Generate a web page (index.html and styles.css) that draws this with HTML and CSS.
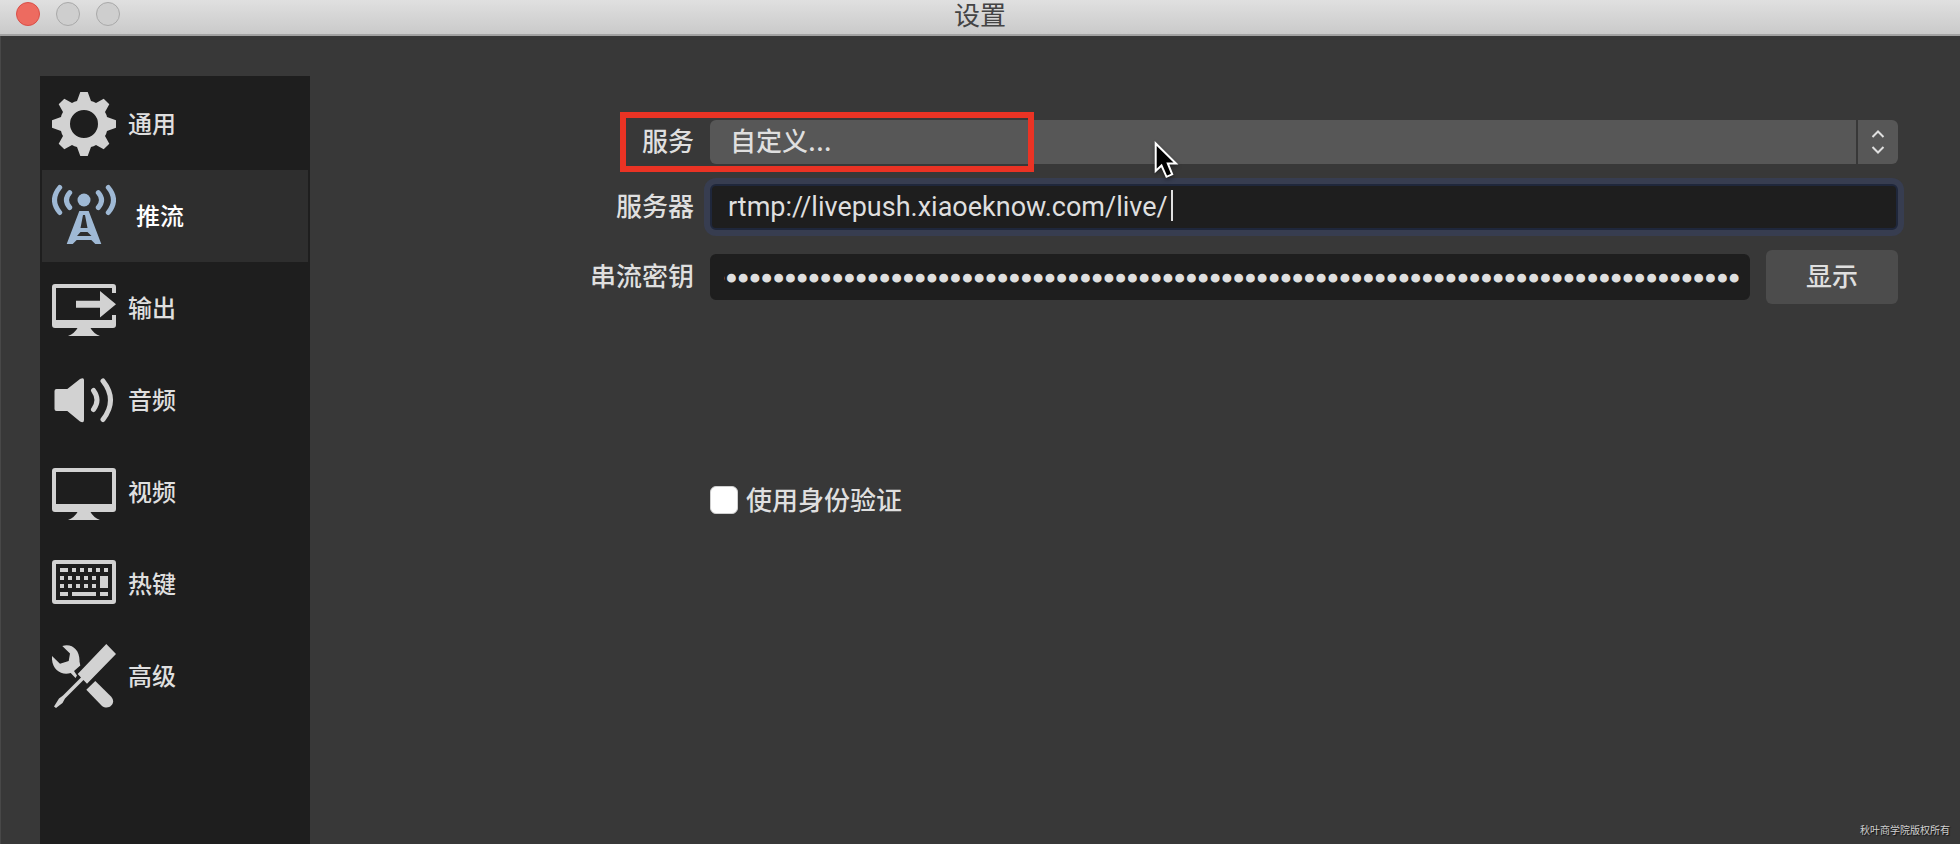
FILE: index.html
```html
<!DOCTYPE html>
<html lang="zh-CN">
<head>
<meta charset="utf-8">
<title>设置</title>
<link rel="stylesheet" href="styles.css">
</head>
<body>
<header class="titlebar">
  <div class="lights">
    <button class="light light-close" type="button" aria-label="关闭"></button>
    <button class="light" type="button" aria-label="最小化"></button>
    <button class="light" type="button" aria-label="缩放"></button>
  </div>
  <h1 class="title">设置</h1>
</header>
<div class="window">
  <nav class="sidebar">
    <a class="item" href="#general">
      <svg class="icon" viewBox="0 0 64 64"><path fill-rule="evenodd" d="M28.3 0H35.7L39 9Q41.500 9.500 44 11L51.700 6.700L57.300 12.300L53 20Q54.500 22.500 55 25L64 28.300V35.700L55 39Q54.500 41.500 53 44L57.300 51.700L51.700 57.300L44 53Q41.500 54.500 39 55L35.700 64H28.300L25 55Q22.500 54.500 20 53L12.300 57.300L6.700 51.700L11 44Q9.500 41.500 9 39L0 35.700V28.300L9 25Q9.500 22.500 11 20L6.700 12.300L12.300 6.700L20 11Q22.500 9.500 25 9ZM32 18a14 14 0 1 0 0 28a14 14 0 1 0 0-28Z"/></svg>
      <span class="name">通用</span>
    </a>
    <a class="item item-active" href="#stream" aria-current="page">
      <svg class="icon" viewBox="0 0 64 64"><circle cx="32" cy="16" r="6.5"/><path fill-rule="evenodd" d="M27.300 27H36.700L49.300 60H43.300L39.300 56H24.700L20.700 60H14.700ZM31 31L28.500 44H35.500L33 31ZM28.500 48L25 52H39.500L35.500 48Z"/><g class="line"><path d="M46.300 8.700Q52.800 16 46.300 23.500M17.700 8.700Q11.200 16 17.700 23.500M56.300 3.500Q66.700 16 56.300 28.500M7.700 3.500Q-2.700 16 7.700 28.500"/></g></svg>
      <span class="name">推流</span>
    </a>
    <a class="item" href="#output">
      <svg class="icon" viewBox="0 0 64 64"><path d="M3 8H61Q64 8 64 11V17H60V12H4V44H60V39H64V49Q64 52 61 52H38.500Q41 57 48 60H16Q23 57 25.500 52H3Q0 52 0 49V11Q0 8 3 8ZM24 24.700H48V15L64 28.200L48 41.500V31.700H24Z"/></svg>
      <span class="name">输出</span>
    </a>
    <a class="item" href="#audio">
      <svg class="icon" viewBox="0 0 64 64"><path d="M4.500 21H15.300L28 11Q32 9 32 12V52Q32 55.500 28 53.500L15.300 43H4.500Q2.500 43 2.500 41V23Q2.500 21 4.500 21Z"/><g class="line"><path d="M41.500 22.500Q48.500 32 41.500 41.500M51 13Q66 32 51 51.500"/></g></svg>
      <span class="name">音频</span>
    </a>
    <a class="item" href="#video">
      <svg class="icon" viewBox="0 0 64 64"><path fill-rule="evenodd" d="M3 8H61Q64 8 64 11V49Q64 52 61 52H38.500Q41 57 48 60H16Q23 57 25.500 52H3Q0 52 0 49V11Q0 8 3 8ZM4 12V44H60V12Z"/></svg>
      <span class="name">视频</span>
    </a>
    <a class="item" href="#hotkeys">
      <svg class="icon" viewBox="0 0 64 64"><path fill-rule="evenodd" d="M3 8H61Q64 8 64 11V49Q64 52 61 52H3Q0 52 0 49V11Q0 8 3 8ZM4 12V48H60V12Z"/><path d="M8 16h8v4h-8zM20 16h4v4h-4zM28 16h4v4h-4zM36 16h4v4h-4zM44 16h4v4h-4zM52 16h4v4h-4zM8 24h4v4h-4zM16 24h4v4h-4zM24 24h4v4h-4zM32 24h4v4h-4zM40 24h4v4h-4zM48 24h8v12h-8zM8 32h4v4h-4zM16 32h4v4h-4zM24 32h4v4h-4zM32 32h4v4h-4zM40 32h4v4h-4zM8 40h8v4h-8zM20 40h24v4h-24zM48 40h8v4h-8z"/></svg>
      <span class="name">热键</span>
    </a>
    <a class="item" href="#advanced">
      <svg class="icon" viewBox="0 0 64 64"><path d="M54.300 0L64 10L35 39.700L31.500 36L13 54.500L10.500 59L4 64L2 62.500L7 54.500L11 51.500L29 33.500L25.700 30Z"/><path d="M43.300 37L59 52.500C65 59 57 67 50 62L34.300 45.700Z"/><path d="M10.300 2C20 -1 28 6 27.500 17.500L28.300 21.500L22 27L25 31.500L23.500 34L18.700 29C9 32 -1 25 0 12L8 19.700L16.700 17L18 9.500Z"/></svg>
      <span class="name">高级</span>
    </a>
  </nav>
  <main class="panel">
    <form class="form">
      <label class="label" for="service">服务</label>
      <div class="combo">
        <select id="service" class="select"><option>自定义...</option></select>
        <div class="stepper"><svg viewBox="0 0 14 24"><path d="M1.500 7L7 1.500L12.500 7M1.500 17L7 22.500L12.500 17"/></svg></div>
        <div class="highlight"></div>
        <svg class="pointer" viewBox="-3 -3 32 44"><path d="M0.700 1.500V29L6.500 23.500L11.500 34.800L17.200 32.300L12.800 21.500H21Z"/></svg>
      </div>
      <label class="label" for="server">服务器</label>
      <div class="server">
        <input id="server" class="field field-focus" type="text" value="rtmp://livepush.xiaoeknow.com/live/">
        <div class="caret"></div>
      </div>
      <label class="label" for="key">串流密钥</label>
      <div class="key-row">
        <input id="key" class="field field-key" type="password" value="000000000000000000000000000000000000000000000000000000000000000000000000000000000000000">
        <button class="show" type="button">显示</button>
      </div>
      <label class="auth"><input class="check" type="checkbox"><span class="name">使用身份验证</span></label>
    </form>
  </main>
</div>
<div class="watermark">秋叶商学院版权所有</div>
</body>
</html>
```

FILE: styles.css
```css
* {
  box-sizing: border-box;
}

body {
  margin: 0;
  min-height: 100vh;
  display: flex;
  flex-direction: column;
  position: relative;
  background: #383838;
  color: #dfdfdf;
  font-family: Inter, "Noto Sans CJK SC", sans-serif;
  font-size: 26px;
  line-height: 32px;
}

input,
select,
button {
  margin: 0;
  border: 0;
  font: inherit;
  color: inherit;
}

.titlebar {
  display: grid;
  grid-template-columns: 1fr auto 1fr;
  height: 36px;
  padding: 0 16px;
  background: linear-gradient(#e0e0e0, #cacaca);
  border-bottom: 2px solid #a2a2a2;
}

.lights {
  display: flex;
  gap: 16px;
  padding-top: 2px;
}

.light {
  width: 24px;
  height: 24px;
  padding: 0;
  border: 1px solid #a9a9a9;
  border-radius: 50%;
  background: #cecece;
}

.light-close {
  border-color: #d94f48;
  background: #ed6b60;
}

.title {
  margin: 0;
  color: #444;
  font-size: 26px;
  font-weight: 400;
  line-height: 32px;
}

.window {
  flex: 1;
  display: flex;
  padding: 40px 62px 0 39px;
  border-left: 1px solid #484848;
}

.sidebar {
  width: 270px;
  padding: 2px;
  background: #1e1e1e;
}

.item {
  display: flex;
  align-items: center;
  gap: 12px;
  height: 92px;
  padding-left: 10px;
  color: #dfdfdf;
  font-size: 24px;
  font-weight: 500;
  text-decoration: none;
}

.item-active {
  gap: 20px;
  background: #2e2e2e;
  color: #fff;
}

.name {
  padding-top: 2px;
}

.icon {
  width: 64px;
  height: 64px;
  fill: #d2d2d2;
}

.item-active .icon {
  fill: #9fb9d5;
}

.line {
  fill: none;
  stroke: #d2d2d2;
  stroke-width: 5;
  stroke-linecap: round;
}

.item-active .line {
  stroke: #9fb9d5;
}

.panel {
  flex: 1;
  padding-top: 44px;
}

.form {
  display: grid;
  grid-template-columns: 384px 1fr;
  gap: 20px 16px;
  align-items: center;
  font-weight: 500;
}

.label {
  text-align: right;
}

.combo {
  position: relative;
  display: flex;
  gap: 2px;
  height: 44px;
}

.select {
  appearance: none;
  flex: 1;
  padding: 0 20px;
  border-radius: 6px 0 0 6px;
  background: #575757;
}

.stepper {
  display: grid;
  place-items: center;
  width: 40px;
  border-radius: 0 6px 6px 0;
  background: #575757;
}

.stepper svg {
  width: 14px;
  height: 24px;
  fill: none;
  stroke: #dfdfdf;
  stroke-width: 2;
}

.highlight {
  position: absolute;
  left: -90px;
  top: -8px;
  width: 414px;
  height: 60px;
  border: 6px solid #ea3324;
  pointer-events: none;
}

.pointer {
  position: absolute;
  left: 442px;
  top: 19px;
  z-index: 1;
  width: 32px;
  height: 44px;
  fill: #000;
  stroke: #fff;
  stroke-width: 2;
  filter: drop-shadow(0 2px 2px rgba(0, 0, 0, 0.4));
  pointer-events: none;
}

.server {
  position: relative;
  display: flex;
}

.field {
  flex: 1;
  min-width: 0;
  height: 46px;
  padding: 0 16px;
  border: 2px solid #1e1e1e;
  border-radius: 6px;
  outline: 0;
  background: #1e1e1e;
  font-family: Roboto, sans-serif;
  font-size: 27px;
  font-weight: 400;
}

.field-focus {
  border-color: #1f273b;
  box-shadow: 0 0 0 6px #373d50;
}

.caret {
  position: absolute;
  left: 461px;
  top: 6px;
  width: 2px;
  height: 31px;
  background: #dfdfdf;
}

.key-row {
  display: flex;
  align-items: center;
  gap: 16px;
}

.field-key {
  padding: 2px 8px 0 12px;
  direction: rtl;
  font-family: "DejaVu Sans", sans-serif;
  font-size: 20px;
  -webkit-text-stroke: 3px #dfdfdf;
}

.show {
  width: 132px;
  height: 54px;
  padding: 0;
  border-radius: 6px;
  background: #4c4c4c;
}

.auth {
  grid-column: 2;
  display: flex;
  align-items: center;
  gap: 8px;
  height: 40px;
  margin-top: 156px;
}

.check {
  appearance: none;
  width: 28px;
  height: 28px;
  border: 1px solid #cfcfcf;
  border-radius: 6px;
  background: #fff;
}

.watermark {
  position: absolute;
  right: 10px;
  bottom: 6px;
  color: #d0d0d0;
  font-size: 10px;
  line-height: 16px;
  text-shadow: 1px 1px 1px #111;
}
```
